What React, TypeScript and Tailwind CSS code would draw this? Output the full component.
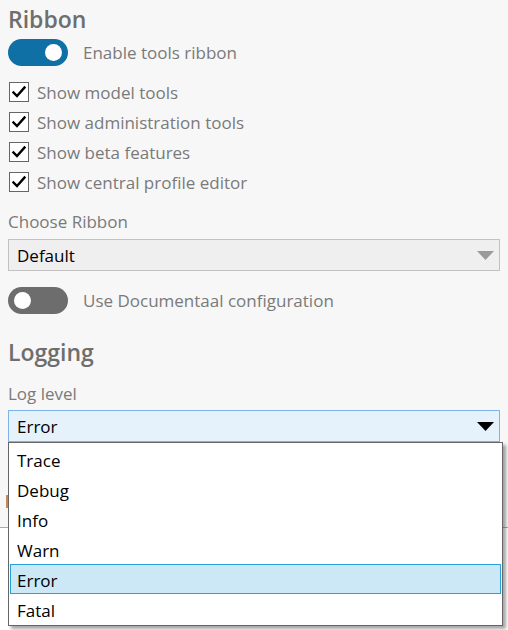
import React from "react";

const font = { fontFamily: '"Open Sans", "Noto Sans", sans-serif' };

function Toggle({ on }: { on: boolean }) {
  return (
    <div
      className={
        on
          ? "w-[60px] h-[27px] rounded-full bg-[#0f70a6] flex items-center justify-end pr-[6px]"
          : "w-[60px] h-[27px] rounded-full bg-[#6d6d6d] flex items-center justify-start pl-[6px]"
      }
    >
      <div className="w-[17px] h-[17px] rounded-full bg-white" />
    </div>
  );
}

function Check({ label }: { label: string }) {
  return (
    <div className="h-[30px] flex items-center">
      <div className="ml-[1px] w-[20px] h-[20px] border border-[#666] bg-white flex items-center justify-center">
        <svg width="16" height="16" viewBox="0 0 16 16">
          <path d="M2.5 8.5 L6 12 L13.5 3.5" fill="none" stroke="#000" strokeWidth="2.4" strokeLinecap="square" strokeLinejoin="miter" />
        </svg>
      </div>
      <span className="ml-[8px] text-[17px] text-[#7a7a7a] pt-[1px]">{label}</span>
    </div>
  );
}

const items = ["Trace", "Debug", "Info", "Warn", "Error", "Fatal"];

export default function App() {
  return (
    <div className="w-[508px] h-[630px] bg-white relative overflow-hidden" style={font}>
      <div className="bg-[#f7f7f7] h-[528px] border-b border-[#a9a9a9] px-[8px] pt-[4px] flex flex-col">
        <h2 className="h-[30px] leading-[30px] text-[23px] font-semibold text-[#6e6e6e]">Ribbon</h2>
        <div className="mt-[5px] h-[27px] flex items-center">
          <Toggle on />
          <span className="ml-[15px] text-[17px] text-[#7a7a7a] pt-[1px]">Enable tools ribbon</span>
        </div>
        <div className="mt-[11px] flex flex-col">
          <Check label="Show model tools" />
          <Check label="Show administration tools" />
          <Check label="Show beta features" />
          <Check label="Show central profile editor" />
        </div>
        <div className="mt-[9px] h-[30px] flex items-center text-[17px] text-[#7a7a7a] pt-[1px]">Choose Ribbon</div>
        <div className="mt-[3px] h-[32px] border border-[#c2c2c2] bg-[#efefef] flex items-center justify-between pl-[8px] pr-[5px]">
          <span className="text-[17px] text-black pt-[1px]">Default</span>
          <svg width="17" height="9" viewBox="0 0 17 9">
            <path d="M0 0 H17 L8.5 9 Z" fill="#9a9a9a" />
          </svg>
        </div>
        <div className="mt-[16px] h-[26px] flex items-center">
          <Toggle on={false} />
          <span className="ml-[15px] text-[17px] text-[#7a7a7a] pt-[1px]">Use Documentaal configuration</span>
        </div>
        <h2 className="mt-[24px] h-[30px] leading-[30px] text-[23px] font-semibold text-[#6e6e6e]">Logging</h2>
        <div className="mt-[11px] h-[30px] flex items-center text-[17px] text-[#7a7a7a] pt-[1px]">Log level</div>
        <div className="mt-[2px] h-[32px] border border-[#7eb4ea] bg-[#e5f1fb] flex items-center justify-between pl-[8px] pr-[5px]">
          <span className="text-[17px] text-black pt-[1px]">Error</span>
          <svg width="17" height="9" viewBox="0 0 17 9">
            <path d="M0 0 H17 L8.5 9 Z" fill="#000" />
          </svg>
        </div>
        <div className="mt-[53px] -ml-[2px] w-[2px] h-[13px] bg-[#c98a4f]" />
      </div>

      <div className="absolute left-[8px] top-[442px] w-[495px] h-[184px] bg-white border border-[#666] p-[1px] shadow-[3px_3px_3px_rgba(0,0,0,0.35)] flex flex-col">
        {items.map((it) => (
          <div
            key={it}
            className={
              it === "Error"
                ? "h-[30px] border border-[#26a0da] bg-[#cce8f6] flex items-center pl-[6px] pt-[3px] text-[17px] text-black"
                : "h-[30px] border border-transparent flex items-center pl-[6px] pt-[3px] text-[17px] text-black"
            }
          >
            {it}
          </div>
        ))}
      </div>
    </div>
  );
}
